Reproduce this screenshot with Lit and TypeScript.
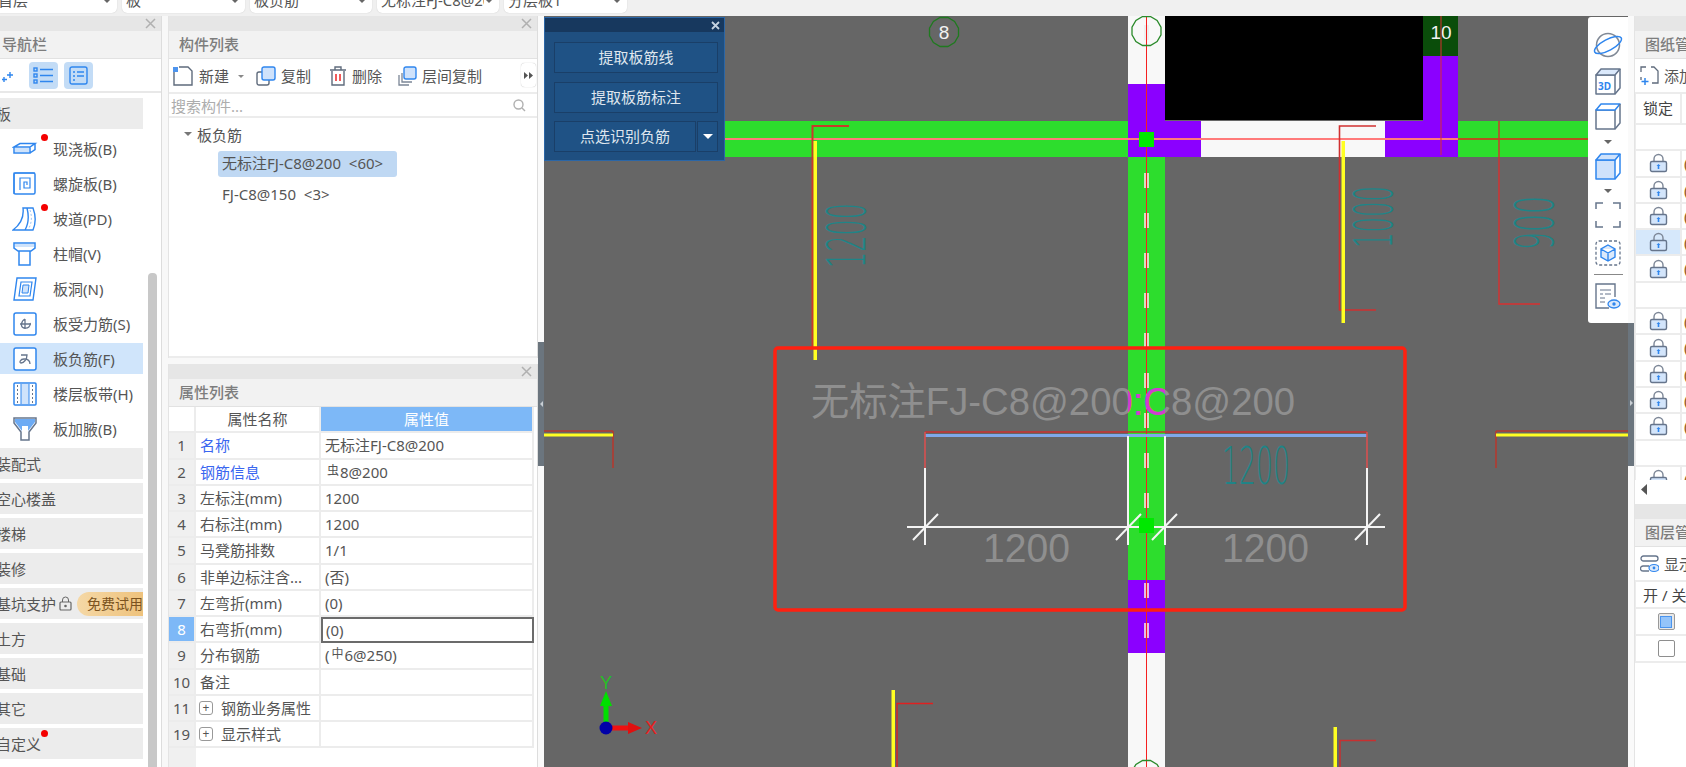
import { LitElement, css, html, svg } from 'lit';
import { customElement } from 'lit/decorators.js';

const BLUE = '#2f86ee';
const SLATE = '#66758c';

const close = html`<svg class="x" width="11" height="11" viewBox="0 0 11 11"><path d="M1 1l9 9M10 1l-9 9" stroke="#b0b0b0" stroke-width="1.5" fill="none"/></svg>`;

// nav item icons, 26x26 box
const navIcons: Record<string, unknown> = {
    slab: svg`<path d="M2 11h16l5-3.5H8L2 11zM2 11v6h16v-6M18 17l5-3.5V7.5" fill="#fff" stroke="${BLUE}" stroke-width="1.5"/><rect x="3" y="12" width="14" height="4" fill="#cfe3fb"/>`,
    spiral: svg`<rect x="2" y="2" width="21" height="21" rx="1.5" fill="none" stroke="${BLUE}" stroke-width="1.5"/><path d="M2 23V2h21M8 19V7h10v10h-6v-6h3v3" fill="none" stroke="${BLUE}" stroke-width="1.2"/>`,
    ramp: svg`<path d="M1 24C9 18 12 10 11 2h4c2 8 2 15-2 22zM15 2h6c3 8 3 15 0 22h-8" fill="#fff" stroke="${BLUE}" stroke-width="1.4"/><path d="M18 4c2 6 2 12-1 18" stroke="#9cc4f5" stroke-dasharray="2 2" fill="none"/>`,
    cap: svg`<path d="M2 2h21v5l-4 3H6L2 7z" fill="#fff" stroke="${BLUE}" stroke-width="1.5"/><rect x="3" y="3" width="19" height="3" fill="#cfe3fb"/><path d="M7 10v14h11V10" fill="none" stroke="${BLUE}" stroke-width="1.5"/>`,
    hole: svg`<path d="M5 2h19l-3 22H2z" fill="none" stroke="${BLUE}" stroke-width="1.4"/><path d="M9 6h11l-2 14H7z" fill="none" stroke="${BLUE}" stroke-width="1.2"/><path d="M11 9h6l-1 8h-6z" fill="#cfe3fb" stroke="${BLUE}"/>`,
    rebarA: svg`<rect x="2" y="2" width="22" height="22" rx="2" fill="#fff" stroke="${BLUE}" stroke-width="1.5"/><path d="M8 13h11M13 8c-4 2-5 8-1 9 4 1 7-2 6-5M13 8v10" fill="none" stroke="${SLATE}" stroke-width="1.3"/>`,
    rebarB: svg`<rect x="2" y="2" width="22" height="22" rx="2" fill="#fff" stroke="${BLUE}" stroke-width="1.5"/><path d="M9 9h6c0 4-3 8-6 8-2 0-1-4 3-4s6 2 6 5" fill="none" stroke="${SLATE}" stroke-width="1.3"/>`,
    strip: svg`<rect x="2" y="2" width="22" height="22" rx="1" fill="#fff" stroke="${BLUE}" stroke-width="1.5"/><rect x="9" y="3" width="8" height="20" fill="#cfe3fb"/><path d="M9 3v20M17 3v20" stroke="${BLUE}"/><path d="M5.500 4v18M20.500 4v18" stroke="${SLATE}" stroke-dasharray="2 2"/>`,
    haunch: svg`<path d="M2 2h22v5l-7 9v8H9v-8L2 7z" fill="#fff" stroke="${SLATE}" stroke-width="1.5"/><path d="M3 3h20v3l-7 9v-5h-6v5L3 6z" fill="#3c8ff0" opacity=".75"/>`,
};

const navItems = [
    { label: '现浇板(B)', icon: 'slab', dot: true },
    { label: '螺旋板(B)', icon: 'spiral' },
    { label: '坡道(PD)', icon: 'ramp', dot: true },
    { label: '柱帽(V)', icon: 'cap' },
    { label: '板洞(N)', icon: 'hole' },
    { label: '板受力筋(S)', icon: 'rebarA' },
    { label: '板负筋(F)', icon: 'rebarB', active: true },
    { label: '楼层板带(H)', icon: 'strip' },
    { label: '板加腋(B)', icon: 'haunch' },
];

const propRows = [
    { n: 1, name: '名称', value: html`无标注FJ-C8@200`, link: true },
    { n: 2, name: '钢筋信息', value: html`<sup class="bar">虫</sup>8@200`, link: true },
    { n: 3, name: '左标注(mm)', value: html`1200` },
    { n: 4, name: '右标注(mm)', value: html`1200` },
    { n: 5, name: '马凳筋排数', value: html`1/1` },
    { n: 6, name: '非单边标注含...', value: html`(否)` },
    { n: 7, name: '左弯折(mm)', value: html`(0)` },
    { n: 8, name: '右弯折(mm)', value: html`(0)`, current: true },
    { n: 9, name: '分布钢筋', value: html`(<sup class="bar">中</sup>6@250)` },
    { n: 10, name: '备注', value: html`` },
    { n: 11, name: '钢筋业务属性', value: html``, group: true },
    { n: 19, name: '显示样式', value: html``, group: true },
];

const lockRows = [0, 1, 1, 1, 2, 1, 0, 1, 1, 1, 1, 1, 0, 1];

const lock = html`<svg width="19" height="20" viewBox="0 0 19 20"><path d="M5 9V6a4.500 4.500 0 0 1 9 0v3" fill="none" stroke="#7d8797" stroke-width="1.4"/><rect x="1.500" y="8.500" width="16" height="10" rx="1.500" fill="#d3e5fb" stroke="${SLATE}" stroke-width="1.4"/><path d="M9.500 11l2 2h-1.200v3H8.700v-3H7.500z" fill="${BLUE}"/></svg>`;

const cube = (fill: string, stroke: string, topStroke: string) => svg`
    <path d="M3 9h19v19H3z" fill="${fill}" stroke="${stroke}" stroke-width="1.5" stroke-linejoin="round"/>
    <path d="M3 9l5-6h19l-5 6z" fill="${fill === 'none' ? '#dbe9fb' : fill}" stroke="${topStroke}" stroke-width="1.5" stroke-linejoin="round"/>
    <path d="M22 28l5-6V3" fill="none" stroke="${stroke}" stroke-width="1.5" stroke-linejoin="round"/>`;

// axis bubbles are faceted in the drawing, not true circles
const bubble = (cx: number, cy: number, r: number, color: string) => {
    const pts = Array.from({ length: 12 }, (_, i) => {
        const a = (i * Math.PI) / 6 + Math.PI / 12;
        return `${(cx + r * Math.cos(a)).toFixed(1)},${(cy + r * Math.sin(a)).toFixed(1)}`;
    }).join(' ');
    return svg`<polygon points="${pts}" fill="none" stroke="${color}" stroke-width="1.3"></polygon>`;
};

@customElement('app-root')
export class AppRoot extends LitElement {
    static styles = css`
        :host {
            display: block;
            width: 1686px;
            height: 767px;
            overflow: hidden;
            background: #f8f8f8;
            font-family: 'Noto Sans', 'Noto Sans CJK SC', sans-serif;
            font-size: 15px;
            color: #555;
        }

        .topbar {
            height: 16px;
            display: flex;
            gap: 5px;
            background: #f0f0f0;
            overflow: hidden;
        }
        .select {
            flex: none;
            box-sizing: border-box;
            height: 23px;
            margin-top: -10px;
            padding: 0 15px 0 4px;
            line-height: 21px;
            background: #fff;
            border-radius: 0 0 5px 5px;
            box-shadow: 0 0 1px #bbb;
            position: relative;
        }
        .select span {
            display: block;
            white-space: nowrap;
            overflow: hidden;
        }
        .select:first-child {
            padding-left: 0;
            border-radius: 0 0 5px 0;
        }
        .select:first-child span {
            margin-left: -2px;
        }
        .select::after {
            content: '';
            position: absolute;
            right: 7px;
            top: 10px;
            border: 3px solid transparent;
            border-top-color: #666;
        }

        .main {
            height: 751px;
            display: grid;
            grid-template-columns: 168px 370px 6px 1084px 6px 52px;
        }
        .mid {
            grid-column: 2;
            width: 370px;
            display: flex;
            flex-direction: column;
            gap: 6px;
            min-height: 0;
        }

        .panel {
            box-sizing: border-box;
            background: #fff;
            border-right: 1px solid #ddd;
            display: flex;
            flex-direction: column;
            overflow: hidden;
            min-height: 0;
        }
        .nav {
            width: 162px;
            grid-column: 1;
        }
        .grip {
            flex: none;
            height: 15px;
            background: #e6e6e6;
            display: flex;
            justify-content: flex-end;
            align-items: center;
            padding-right: 5px;
        }
        .title {
            flex: none;
            height: 27px;
            line-height: 26px;
            background: #f2f2f2;
            color: #7d7d7d;
            padding-left: 10px;
            font-weight: 500;
            border-bottom: 1px solid #e2e2e2;
            white-space: nowrap;
        }
        .nav .title {
            padding-left: 2px;
        }

        .navtools {
            flex: none;
            height: 34px;
            box-sizing: border-box;
            display: flex;
            align-items: center;
            gap: 6px;
            padding-left: 1px;
            border-bottom: 2px solid #e8e8e8;
        }
        .navtools .stars {
            width: 22px;
        }
        .iconbtn {
            width: 29px;
            height: 27px;
            border-radius: 4px;
            background: #c3dcf6;
            display: flex;
            align-items: center;
            justify-content: center;
        }
        .navbody {
            flex: 1;
            display: flex;
            gap: 5px;
            min-height: 0;
        }
        .navlist {
            width: 143px;
            flex: none;
            padding-top: 5px;
            display: flex;
            flex-direction: column;
            gap: 4px;
            overflow: hidden;
        }
        .section,
        .item {
            flex: none;
            height: 31px;
            line-height: 30px;
            white-space: nowrap;
            position: relative;
        }
        .section {
            background: #ececec;
            padding-left: 0;
            display: flex;
            align-items: center;
        }
        .section > span:first-child {
            margin-left: -4px;
        }
        .item {
            display: flex;
            align-items: center;
        }
        .item svg {
            margin-left: 12px;
            width: 26px;
            height: 26px;
            flex: none;
        }
        .item .label {
            margin-left: 15px;
        }
        .item.active {
            background: #d0e5fb;
        }
        .dot {
            position: absolute;
            width: 7px;
            height: 7px;
            border-radius: 50%;
            background: #f40000;
        }
        .item .dot {
            left: 41px;
            top: 1px;
        }
        .section .dot {
            left: 41px;
            top: 2px;
        }
        .pill {
            margin-left: auto;
            width: 66px;
            height: 24px;
            line-height: 24px;
            flex: none;
            box-sizing: border-box;
            padding-left: 10px;
            border-radius: 12px 0 0 12px;
            background: linear-gradient(90deg, #f5d8a6, #eec27c);
            color: #7b5320;
            font-size: 14px;
            overflow: hidden;
        }
        .lockmini {
            margin-left: 3px;
        }
        .scroll {
            width: 9px;
            margin-top: 180px;
            background: #c8c8c8;
            border-radius: 4px 4px 0 0;
            flex: none;
        }

        .parts {
            height: 342px;
            flex: none;
            border-left: 1px solid #e4e4e4;
        }
        .parttools {
            flex: none;
            height: 35px;
            box-sizing: border-box;
            display: flex;
            align-items: center;
            padding-left: 3px;
            border-bottom: 2px solid #ececec;
            white-space: nowrap;
            position: relative;
        }
        .tool {
            display: flex;
            align-items: center;
            gap: 5px;
        }
        .tool.new {
            margin-right: 12px;
        }
        .tool.copy {
            margin-right: 18px;
        }
        .tool.del {
            margin-right: 16px;
        }
        .caret {
            display: inline-block;
            border: 3.500px solid transparent;
            border-top-color: #888;
            margin: 4px 0 0 4px;
        }
        .more {
            position: absolute;
            right: 1px;
            top: 4px;
            width: 15px;
            height: 24px;
            border-radius: 4px;
            box-shadow: 0 0 1px #aaa;
            display: flex;
            align-items: center;
            justify-content: center;
            background: #fff;
        }
        .search {
            flex: none;
            height: 24px;
            box-sizing: border-box;
            display: flex;
            align-items: center;
            justify-content: space-between;
            padding: 0 11px 0 2px;
            color: #adadad;
            border-bottom: 2px solid #ececec;
        }
        .tree {
            flex: 1;
            padding-top: 1px;
            border-bottom: 2px solid #ececec;
        }
        .branch {
            height: 30px;
            margin-bottom: 2px;
            display: flex;
            align-items: center;
            padding-left: 15px;
            gap: 5px;
        }
        .branch i {
            border: 4px solid transparent;
            border-top-color: #777;
            margin-top: 4px;
        }
        .leaf {
            margin: 0 0 5px 49px;
            width: fit-content;
            height: 26px;
            line-height: 25px;
            padding: 0 4px;
            min-width: 171px;
            border-radius: 3px;
            white-space: pre;
        }
        .leaf.sel {
            background: #bfd8f3;
        }

        .props {
            flex: 1;
            border-left: 1px solid #e4e4e4;
        }
        .grid {
            flex: 1;
            display: grid;
            grid-template-columns: 27px 125px 213px;
            grid-auto-rows: 26.250px;
            align-content: start;
            background: linear-gradient(90deg, #f0f0f0 27px, #fff 27px);
            min-height: 0;
        }
        .cell {
            box-sizing: border-box;
            line-height: 24px;
            padding-left: 4px;
            background: #fff;
            border-right: 2px solid #ececec;
            border-bottom: 2px solid #ececec;
            white-space: nowrap;
            overflow: hidden;
        }
        .cell.idx {
            background: #f0f0f0;
            text-align: center;
            padding: 0;
        }
        .cell.idx.blank {
            background: #fff;
        }
        .cell.head {
            text-align: center;
            padding: 0;
        }
        .cell.valhead,
        .cell.idx.cur {
            background: #7db8f7;
            color: #fff;
        }
        .cell.link {
            color: #3a66f0;
        }
        .cell.edit {
            border: 2px solid #6b6b6b;
            line-height: 22px;
            padding-left: 3px;
        }
        .cell.grp {
            display: flex;
            align-items: center;
            gap: 8px;
            padding-left: 3px;
        }
        .plus {
            width: 14px;
            height: 14px;
            box-sizing: border-box;
            border: 1px solid #999;
            border-radius: 3px;
            line-height: 11px;
            text-align: center;
            font-size: 12px;
            flex: none;
        }
        .bar {
            font-size: 12px;
            vertical-align: 3px;
            line-height: 0;
            margin: 0 1px 0 2px;
        }

        .strip {
            position: relative;
            background: #fafafa;
        }
        .strip span {
            position: absolute;
            left: 0;
            right: 0;
            top: 326px;
            height: 124px;
            background: #6b757e;
            display: flex;
            align-items: center;
            justify-content: center;
        }
        .strip.r span {
            top: 307px;
            height: 143px;
        }
        .strip i {
            border: 3px solid transparent;
        }
        .strip.l i {
            border-right-color: #c8ced3;
            margin-left: -3px;
        }
        .strip.r i {
            border-left-color: #c8ced3;
            margin-left: 3px;
            margin-top: 17px;
        }

        .canvas {
            position: relative;
            background: #666;
            overflow: hidden;
        }
        .canvas > svg {
            position: absolute;
            inset: 0;
            display: block;
        }
        .float {
            position: absolute;
            left: 0;
            top: 1px;
            width: 181px;
            height: 144px;
            box-sizing: border-box;
            background: #1f4f80;
            border: 1px solid #2b66a6;
            display: flex;
            flex-direction: column;
        }
        .float .bar-top {
            flex: none;
            height: 14px;
            background: #17385e;
            display: flex;
            justify-content: flex-end;
            align-items: center;
            padding-right: 4px;
        }
        .float .btns {
            flex: 1;
            padding: 10px 6px 0 9px;
            display: flex;
            flex-direction: column;
            gap: 9px;
        }
        .fbtn {
            height: 31px;
            box-sizing: border-box;
            background: #1f5285;
            border: 1px solid #1a3f68;
            color: #dfe6ee;
            text-align: center;
            line-height: 28px;
            flex: none;
        }
        .fsplit {
            display: flex;
            gap: 1px;
            margin-top: -1px;
        }
        .fsplit .fbtn:first-child {
            flex: 1;
        }
        .fsplit .fbtn:last-child {
            width: 21px;
            display: flex;
            align-items: center;
            justify-content: center;
        }
        .fsplit i {
            border: 5px solid transparent;
            border-top-color: #fff;
            border-bottom: 0;
        }

        .viewbar {
            position: absolute;
            right: 0;
            top: 1px;
            width: 40px;
            height: 306px;
            box-sizing: border-box;
            background: #fff;
            border-radius: 3px 0 0 3px;
            display: flex;
            flex-direction: column;
            align-items: center;
            padding-top: 14px;
        }
        .viewbar svg {
            flex: none;
        }
        .viewbar .v3d {
            margin-top: 7px;
        }
        .viewbar .vbox {
            margin-top: 4px;
        }
        .viewbar .vframe {
            margin-top: 0;
        }
        .viewbar .vdash {
            margin-top: 12px;
        }
        .viewbar .tri {
            flex: none;
            margin: 8px 0 7px;
            border: 4px solid transparent;
            border-top-color: #666;
            border-bottom: 0;
        }
        .viewbar .tri.b {
            margin: 7px 0 9px;
        }
        .viewbar hr {
            width: 29px;
            border: 0;
            border-top: 1px solid #888;
            margin: 8px 0 8px;
        }

        .right {
            display: flex;
            flex-direction: column;
            border-left: 1px solid #e4e4e4;
            background: #fff;
            min-width: 0;
            overflow: hidden;
        }
        .right .tools {
            flex: none;
            height: 35px;
            box-sizing: border-box;
            display: flex;
            align-items: center;
            gap: 5px;
            padding-left: 5px;
            border-bottom: 2px solid #ececec;
            white-space: nowrap;
        }
        .rhead,
        .rrow {
            box-sizing: border-box;
            height: 26.300px;
            flex: none;
            display: flex;
            border-bottom: 2px solid #ececec;
            border-left: 1px solid #ececec;
            white-space: nowrap;
        }
        .rhead {
            height: 31px;
            line-height: 27px;
            color: #444;
        }
        .rc {
            width: 44px;
            flex: none;
            border-right: 2px solid #ececec;
            display: flex;
            align-items: center;
            justify-content: center;
        }
        .rrow.blank .rc {
            border-right-color: transparent;
        }
        .rrow.hl .rc {
            background: #d6e8fb;
        }
        .rrow span.val {
            padding-left: 2px;
            color: #96602c;
            font-weight: 500;
            line-height: 24px;
        }
        .rlist {
            height: 355px;
            flex: none;
            overflow: hidden;
        }
        .hscroll {
            height: 24px;
            flex: none;
            display: flex;
            align-items: flex-start;
            padding: 4px 0 0 6px;
            box-sizing: border-box;
        }
        .layers .rc {
            width: 60px;
            border-right: 0;
        }
        .layers .rrow {
            height: 27px;
        }
        .layers .rhead {
            height: 27px;
            padding-left: 7px;
        }
        .check {
            width: 17px;
            height: 17px;
            box-sizing: border-box;
            border: 1px solid #8e8e8e;
            border-radius: 2px;
            background: #fff;
            display: flex;
            align-items: center;
            justify-content: center;
        }
        .check.on {
            border-color: #999;
            background: #e8e8e8;
        }
        .check.on b {
            width: 12px;
            height: 12px;
            background: #94c4fa;
            border: 1px solid #4a94ee;
            box-sizing: border-box;
        }
    `;

    private renderCad() {
        const dashes = [173, 213, 253, 293, 333, 373, 413, 453, 493, 583, 623];
        const teal = '#1f8487';
        const dim = '#8f8f8f';
        const noteFont = "'Liberation Sans','Noto Sans CJK SC',sans-serif";
        const thin = "'DejaVu Sans',sans-serif";
        return html`<svg width="1084" height="751" viewBox="544 16 1084 751">
            <defs>
                <clipPath id="overBeam"><rect x="1128" y="340" width="37" height="100"></rect></clipPath>
            </defs>
            <!-- beams -->
            <rect x="544" y="121" width="584" height="36" fill="#2ddd2d"></rect>
            <rect x="1128" y="16" width="37" height="68" fill="#f8f8f8"></rect>
            <rect x="1128" y="84" width="37" height="73" fill="#8b00ff"></rect>
            <rect x="1165" y="121" width="36" height="36" fill="#8b00ff"></rect>
            <rect x="1201" y="121" width="184" height="36" fill="#f8f8f8"></rect>
            <rect x="1385" y="121" width="73" height="36" fill="#8b00ff"></rect>
            <rect x="1423" y="56" width="35" height="65" fill="#8b00ff"></rect>
            <rect x="1423" y="16" width="35" height="40" fill="#0a4d0a"></rect>
            <rect x="1458" y="121" width="170" height="36" fill="#2ddd2d"></rect>
            <rect x="1165" y="16" width="258" height="104" fill="#000"></rect>
            <rect x="1128" y="157" width="37" height="423" fill="#2ddd2d"></rect>
            <rect x="1128" y="580" width="37" height="73" fill="#8b00ff"></rect>
            <rect x="1128" y="653" width="37" height="114" fill="#f8f8f8"></rect>
            ${dashes.map(
                (y) => svg`<rect x="1144" y="${y}" width="5" height="15" fill="#f4dede" opacity=".85"></rect>`
            )}
            <rect x="1144" y="25" width="5" height="15" fill="#eee"></rect>

            <!-- axis lines -->
            <path d="M544 139H1458" stroke="#ff7a7a" stroke-width="2" fill="none"></path>
            <path d="M1458 139H1628" stroke="#b5501f" stroke-width="2" fill="none"></path>
            <path d="M1146.500 16V767" stroke="#f62020" stroke-width="1" fill="none"></path>
            <rect x="1139" y="132" width="15" height="15" fill="#00e800"></rect>

            <!-- axis bubbles -->
            ${bubble(944, 32, 15, '#1f7a1f')}
            <text x="944" y="39" text-anchor="middle" font-size="19" fill="#f2f2f2" font-family="${noteFont}">8</text>
            ${bubble(1146.5, 31, 15, '#2a8a2a')} ${bubble(1146.5, 775, 15, '#2a8a2a')}
            <text x="1441" y="39" text-anchor="middle" font-size="19" fill="#f2f2f2" font-family="${noteFont}">10</text>

            <!-- rebar brackets -->
            <path d="M849 126H812.500V347" stroke="#c83a2a" stroke-width="2" fill="none"></path>
            <rect x="813.500" y="141" width="3.500" height="219" fill="#ffff22"></rect>
            <path d="M1376 126H1339.500V310H1376" stroke="#d03030" stroke-width="1.600" fill="none"></path>
            <rect x="1341.500" y="141" width="3.500" height="182" fill="#ffff22"></rect>
            <path d="M1441 16V155" stroke="#d83030" stroke-width="1" fill="none"></path>
            <path d="M1499 121V304H1540" stroke="#d83030" stroke-width="1.400" fill="none"></path>
            <text transform="translate(865 268) rotate(-90)" textLength="65" lengthAdjust="spacingAndGlyphs"
                font-size="53" font-weight="200" fill="${teal}" font-family="${thin}">1200</text>
            <text transform="translate(1392 248) rotate(-90)" textLength="62" lengthAdjust="spacingAndGlyphs"
                font-size="53" font-weight="200" fill="${teal}" font-family="${thin}">1000</text>
            <text transform="translate(1553 250) rotate(-90)" textLength="54" lengthAdjust="spacingAndGlyphs"
                font-size="53" font-weight="200" fill="${teal}" font-family="${thin}">900</text>

            <!-- side stubs -->
            <path d="M544 431H613M613 431V468" stroke="#b23a30" stroke-width="1.600" fill="none"></path>
            <rect x="544" y="433.500" width="69" height="3" fill="#ffff22"></rect>
            <path d="M1628 431H1496M1496 431V468" stroke="#b23a30" stroke-width="1.600" fill="none"></path>
            <rect x="1496" y="433.500" width="132" height="3" fill="#ffff22"></rect>
            <rect x="891.500" y="690" width="3.500" height="77" fill="#ffff22"></rect>
            <path d="M933 703.500H897V767" stroke="#e02020" stroke-width="1.300" fill="none"></path>
            <rect x="1333.500" y="727" width="3.500" height="40" fill="#ffff22"></rect>
            <path d="M1376 740.500H1340V767" stroke="#c83030" stroke-width="1.500" fill="none"></path>

            <!-- selected rebar -->
            <text x="811" y="415" textLength="484" lengthAdjust="spacingAndGlyphs" font-size="39" fill="${dim}"
                font-family="${noteFont}">无标注FJ-C8@200:C8@200</text>
            <text x="811" y="415" textLength="484" lengthAdjust="spacingAndGlyphs" font-size="39" fill="#d03cd0"
                clip-path="url(#overBeam)" font-family="${noteFont}">无标注FJ-C8@200:C8@200</text>
            <path d="M925 432H1367" stroke="#cc3030" stroke-width="1.500"></path>
            <path d="M925 435.500H1367" stroke="#7fa8ea" stroke-width="3"></path>
            <path d="M925 432V468M1367 432V468" stroke="#d85050" stroke-width="1.600"></path>
            <g stroke="#f4f4f4" stroke-width="2" fill="none">
                <path d="M925 468V545M1367 468V545M1128 436V545M1165 436V545M907 527H1385"></path>
                <path d="M913 540L938 514M1116 540L1141 514M1152 540L1177 514M1355 540L1380 514"></path>
            </g>
            <rect x="1139" y="518" width="15" height="15" fill="#00e800"></rect>
            <text x="983" y="562" textLength="87" lengthAdjust="spacingAndGlyphs" font-size="40" fill="${dim}"
                font-family="${noteFont}">1200</text>
            <text x="1222" y="562" textLength="87" lengthAdjust="spacingAndGlyphs" font-size="40" fill="${dim}"
                font-family="${noteFont}">1200</text>
            <text x="1222" y="484" textLength="68" lengthAdjust="spacingAndGlyphs" font-size="52" font-weight="200"
                fill="${teal}" font-family="${thin}">1200</text>
            <rect x="775" y="348" width="630" height="262" rx="3" fill="none" stroke="#ff2010" stroke-width="3.500"></rect>

            <!-- coordinate axes -->
            <path d="M606 722V706" stroke="#00e000" stroke-width="5"></path>
            <path d="M606 691l6 15h-12z" fill="#00e000"></path>
            <path d="M611 728H628" stroke="#f01010" stroke-width="5"></path>
            <path d="M642 728l-14 6v-12z" fill="#e01010"></path>
            <circle cx="606" cy="728" r="6.500" fill="#0000a8"></circle>
            <text x="606" y="689" text-anchor="middle" font-size="18" fill="#25c025" font-family="${noteFont}">Y</text>
            <text x="651" y="734" text-anchor="middle" font-size="18" fill="#e82020" font-family="${noteFont}">X</text>
        </svg>`;
    }

    private renderViewBar() {
        return html`<div class="viewbar">
            <svg width="32" height="28" viewBox="0 0 32 28">
                <circle cx="16" cy="14" r="11.500" fill="none" stroke="#808996" stroke-width="1.500"></circle>
                <ellipse cx="16" cy="14" rx="15" ry="5.500" transform="rotate(-28 16 14)" fill="none" stroke="${BLUE}" stroke-width="1.500"></ellipse>
            </svg>
            <svg class="v3d" width="30" height="31" viewBox="0 0 30 31">
                ${cube('none', SLATE, SLATE)}
                <text x="5" y="24" font-size="10" font-weight="700" fill="${BLUE}" font-family="'Noto Sans',sans-serif">3D</text>
            </svg>
            <svg class="vbox" width="30" height="31" viewBox="0 0 30 31">${cube('#fff', SLATE, BLUE)}</svg>
            <div class="tri"></div>
            <svg width="30" height="31" viewBox="0 0 30 31">${cube('#cfe2fb', BLUE, BLUE)}</svg>
            <div class="tri b"></div>
            <svg class="vframe" width="26" height="26" viewBox="0 0 26 26">
                <path d="M1 7V1h7M18 1h7v6M25 19v6h-7M8 25H1v-6" fill="none" stroke="${SLATE}" stroke-width="1.500"></path>
            </svg>
            <svg class="vdash" width="26" height="26" viewBox="0 0 26 26">
                <rect x="1" y="1" width="24" height="24" rx="3" fill="none" stroke="${SLATE}" stroke-width="1.300" stroke-dasharray="3 2"></rect>
                <path d="M13 5l7 4v8l-7 4-7-4V9zM6 9l7 4 7-4M13 13v8" fill="#dbe9fb" stroke="${BLUE}" stroke-width="1.400"></path>
            </svg>
            <hr />
            <svg width="26" height="27" viewBox="0 0 26 27">
                <path d="M20 14V1H1v24h13" fill="none" stroke="${SLATE}" stroke-width="1.400"></path>
                <path d="M5 7h11M5 11h3M10 11h6M5 15h5M5 19h5" stroke="${SLATE}"></path>
                <ellipse cx="19" cy="21" rx="6" ry="4" fill="#dbe9fb" stroke="${BLUE}" stroke-width="1.300"></ellipse>
                <circle cx="19" cy="21" r="1.700" fill="${BLUE}"></circle>
            </svg>
        </div>`;
    }

    render() {
        return html`
            <div class="topbar">
                <div class="select" style="width:117px"><span>首层</span></div>
                <div class="select" style="width:123px"><span>板</span></div>
                <div class="select" style="width:122px"><span>板负筋</span></div>
                <div class="select" style="width:122px"><span>无标注FJ-C8@200</span></div>
                <div class="select" style="width:123px"><span>分层板1</span></div>
            </div>
            <div class="main">
                <div class="panel nav">
                    <div class="grip">${close}</div>
                    <div class="title">导航栏</div>
                    <div class="navtools">
                        <svg class="stars" width="22" height="20" viewBox="0 0 22 20">
                            <path d="M9 7v6M6 10h6M3 12v5M1 14.500h5" stroke="${BLUE}" stroke-width="1.400" fill="none"></path>
                        </svg>
                        <div class="iconbtn">
                            <svg width="21" height="17" viewBox="0 0 21 17" fill="none" stroke="${BLUE}" stroke-width="1.400">
                                <rect x="1" y="1" width="3" height="3"></rect><rect x="1" y="7" width="3" height="3"></rect><rect x="1" y="13" width="3" height="3"></rect>
                                <path d="M7 2.500h13M7 8.500h13M7 14.500h13"></path>
                            </svg>
                        </div>
                        <div class="iconbtn">
                            <svg width="19" height="19" viewBox="0 0 19 19" fill="none" stroke="${BLUE}" stroke-width="1.400">
                                <rect x="1" y="1" width="17" height="17" rx="2"></rect>
                                <path d="M4 6h2M8 6h7M4 10h2M8 10h7M4 14h2"></path>
                            </svg>
                        </div>
                    </div>
                    <div class="navbody">
                        <div class="navlist">
                            <div class="section"><span>板</span></div>
                            ${navItems.map(
                                (it) => html`<div class="item ${it.active ? 'active' : ''}">
                                    <svg viewBox="0 0 26 26">${navIcons[it.icon]}</svg>
                                    ${it.dot ? html`<span class="dot"></span>` : ''}
                                    <span class="label">${it.label}</span>
                                </div>`
                            )}
                            <div class="section"><span>装配式</span></div>
                            <div class="section"><span>空心楼盖</span></div>
                            <div class="section"><span>楼梯</span></div>
                            <div class="section"><span>装修</span></div>
                            <div class="section">
                                <span>基坑支护</span>
                                <svg class="lockmini" width="13" height="15" viewBox="0 0 13 15">
                                    <path d="M3.500 6V4a3 3 0 0 1 6 0v2" fill="none" stroke="#666"></path>
                                    <rect x="1" y="6" width="11" height="8" rx="1" fill="none" stroke="#666" stroke-width="1.200"></rect>
                                    <circle cx="6.500" cy="10" r="1.300" fill="#666"></circle>
                                </svg>
                                <span class="pill">免费试用</span>
                            </div>
                            <div class="section"><span>土方</span></div>
                            <div class="section"><span>基础</span></div>
                            <div class="section"><span>其它</span></div>
                            <div class="section"><span>自定义</span><span class="dot"></span></div>
                        </div>
                        <div class="scroll"></div>
                    </div>
                </div>

                <div class="mid">
                    <div class="panel parts">
                        <div class="grip">${close}</div>
                        <div class="title">构件列表</div>
                        <div class="parttools">
                            <span class="tool new">
                                <svg width="22" height="20" viewBox="0 0 22 20">
                                    <path d="M2 6V19H20V5L16 1H7" fill="none" stroke="#5f6b7c" stroke-width="1.400"></path>
                                    <rect x="1" y="1" width="5" height="5" fill="#4d94ee"></rect>
                                </svg>
                                <span>新建</span><i class="caret"></i>
                            </span>
                            <span class="tool copy">
                                <svg width="20" height="20" viewBox="0 0 20 20">
                                    <rect x="1" y="6" width="12" height="13" rx="2" fill="none" stroke="#5f6b7c" stroke-width="1.400"></rect>
                                    <rect x="6" y="1" width="13" height="13" rx="2" fill="#cfe2fb" stroke="${BLUE}" stroke-width="1.400"></rect>
                                </svg>
                                <span>复制</span>
                            </span>
                            <span class="tool del">
                                <svg width="18" height="20" viewBox="0 0 18 20">
                                    <path d="M3 5V19H15V5M1 4H17M6 4V1H12V4" fill="none" stroke="#5f6b7c" stroke-width="1.400"></path>
                                    <path d="M7 8V15M11 8V15" stroke="#e33" stroke-width="1.600"></path>
                                </svg>
                                <span>删除</span>
                            </span>
                            <span class="tool">
                                <svg width="19" height="20" viewBox="0 0 19 20">
                                    <path d="M1 9V19H11M4 7V16H14" fill="none" stroke="#7b8696" stroke-width="1.300"></path>
                                    <rect x="6" y="1" width="12" height="12" rx="2" fill="#cfe2fb" stroke="${BLUE}" stroke-width="1.400"></rect>
                                </svg>
                                <span>层间复制</span>
                            </span>
                            <span class="more">
                                <svg width="9" height="7" viewBox="0 0 9 7"><path d="M0 0l4 3.500L0 7zM5 0l4 3.500L5 7z" fill="#555"></path></svg>
                            </span>
                        </div>
                        <div class="search">
                            <span>搜索构件...</span>
                            <svg width="13" height="13" viewBox="0 0 13 13">
                                <circle cx="5.500" cy="5.500" r="4.500" fill="none" stroke="#b0b0b0" stroke-width="1.400"></circle>
                                <path d="M9 9l3 3" stroke="#b0b0b0" stroke-width="1.400"></path>
                            </svg>
                        </div>
                        <div class="tree">
                            <div class="branch"><i></i><span>板负筋</span></div>
                            <div class="leaf sel">无标注FJ-C8@200  &lt;60&gt;</div>
                            <div class="leaf">FJ-C8@150  &lt;3&gt;</div>
                        </div>
                    </div>

                    <div class="panel props">
                        <div class="grip">${close}</div>
                        <div class="title">属性列表</div>
                        <div class="grid">
                            <div class="cell idx blank"></div>
                            <div class="cell head">属性名称</div>
                            <div class="cell head valhead">属性值</div>
                            ${propRows.map(
                                (r) => html`
                                    <div class="cell idx ${r.current ? 'cur' : ''}">${r.n}</div>
                                    <div class="cell ${r.link ? 'link' : ''} ${r.group ? 'grp' : ''}">
                                        ${r.group ? html`<span class="plus">+</span>` : ''}${r.name}
                                    </div>
                                    <div class="cell ${r.current ? 'edit' : ''}">${r.value}</div>
                                `
                            )}
                        </div>
                    </div>
                </div>

                <div class="strip l"><span><i></i></span></div>

                <div class="canvas">
                    ${this.renderCad()}
                    <div class="float">
                        <div class="bar-top">
                            <svg width="9" height="9" viewBox="0 0 9 9"><path d="M1 1l7 7M8 1L1 8" stroke="#c4d2e0" stroke-width="1.800"></path></svg>
                        </div>
                        <div class="btns">
                            <div class="fbtn">提取板筋线</div>
                            <div class="fbtn">提取板筋标注</div>
                            <div class="fsplit">
                                <div class="fbtn">点选识别负筋</div>
                                <div class="fbtn"><i></i></div>
                            </div>
                        </div>
                    </div>
                    ${this.renderViewBar()}
                </div>

                <div class="strip r"><span><i></i></span></div>

                <div class="right">
                    <div class="grip"></div>
                    <div class="title">图纸管理</div>
                    <div class="tools">
                        <svg width="19" height="19" viewBox="0 0 19 19" style="flex:none">
                            <path d="M6 1H1v5M1 11v3M11 1h3l4 4v12h-6" fill="none" stroke="#5f6b7c" stroke-width="1.300"></path>
                            <path d="M5 12v7M1.500 15.500h7" stroke="${BLUE}" stroke-width="1.500"></path>
                        </svg>
                        <span>添加图纸</span>
                    </div>
                    <div class="rhead"><div class="rc">锁定</div></div>
                    <div class="rlist">
                        ${lockRows.map((k) =>
                            k === 0
                                ? html`<div class="rrow blank"><div class="rc"></div></div>`
                                : html`<div class="rrow ${k === 2 ? 'hl' : ''}"><div class="rc">${lock}</div><span class="val">(否)</span></div>`
                        )}
                    </div>
                    <div class="hscroll">
                        <svg width="6" height="11" viewBox="0 0 6 11"><path d="M6 0v11L0 5.500z" fill="#555"></path></svg>
                    </div>
                    <div class="grip"></div>
                    <div class="title">图层管理</div>
                    <div class="tools">
                        <svg width="19" height="19" viewBox="0 0 19 19" style="flex:none">
                            <rect x="1" y="2" width="17" height="5" rx="2.500" fill="none" stroke="${SLATE}" stroke-width="1.300"></rect>
                            <path d="M9 12H3a2.500 2.500 0 0 0 0 5h6" fill="none" stroke="${SLATE}" stroke-width="1.300"></path>
                            <ellipse cx="14" cy="14" rx="5" ry="3.500" fill="#dbe9fb" stroke="${BLUE}" stroke-width="1.200"></ellipse>
                            <circle cx="14" cy="14" r="1.400" fill="${BLUE}"></circle>
                        </svg>
                        <span>显示设置</span>
                    </div>
                    <div class="layers">
                        <div class="rhead">开 / 关</div>
                        <div class="rrow"><div class="rc"><span class="check on"><b></b></span></div></div>
                        <div class="rrow"><div class="rc"><span class="check"></span></div></div>
                    </div>
                </div>
            </div>
        `;
    }
}
